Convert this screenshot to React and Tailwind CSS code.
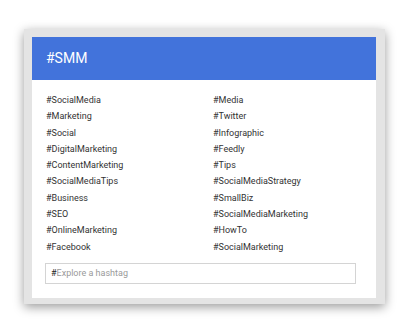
const left = [
  '#SocialMedia', '#Marketing', '#Social', '#DigitalMarketing', '#ContentMarketing',
  '#SocialMediaTips', '#Business', '#SEO', '#OnlineMarketing', '#Facebook',
];
const right = [
  '#Media', '#Twitter', '#Infographic', '#Feedly', '#Tips',
  '#SocialMediaStrategy', '#SmallBiz', '#SocialMediaMarketing', '#HowTo', '#SocialMarketing',
];

export default function App() {
  return (
    <div className="w-[410px] h-[334px] bg-white pt-[29px] pl-[24px]" style={{ fontFamily: 'Roboto, "Liberation Sans", sans-serif' }}>
      {/* Frame */}
      <div className="w-[361px] h-[275px] bg-[#e4e4e4] p-[8px] pr-[9px] pb-[6px] shadow-[0_3px_10px_rgba(0,0,0,0.4)]">
        <div className="h-full bg-white flex flex-col">
          <header className="h-[43px] bg-[#4273db] flex items-center px-[14px]">
            <span className="text-white text-[14px]">#SMM</span>
          </header>

          <div className="flex px-[14px] pt-[12px]">
            {[left, right].map((col, c) => (
              <ul key={c} className={c === 0 ? 'w-[167px]' : ''}>
                {col.map(tag => (
                  <li key={tag} className="h-[16.3px] leading-[16.3px] text-[9px] text-[#333]">{tag}</li>
                ))}
              </ul>
            ))}
          </div>

          <div className="ml-[13px] mr-[20px] mt-[8px] h-[21px] border border-[#d4d4d4] flex items-center px-[5px] text-[9px]">
            <span className="text-[#222]">#</span>
            <span className="text-[#9a9a9a]">Explore a hashtag</span>
          </div>
        </div>
      </div>
    </div>
  );
}
